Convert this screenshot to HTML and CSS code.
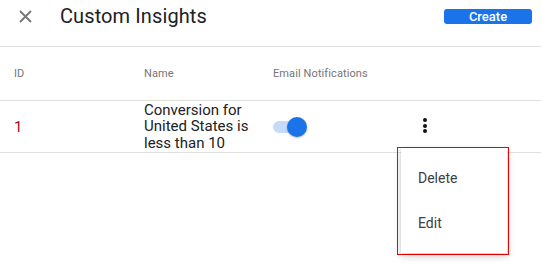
FILE: index.html
```html
<!DOCTYPE html>
<html>
<head>
<meta charset="utf-8">
<link rel="stylesheet" href="styles.css">
</head>
<body>
<div class="page">
  <header class="topbar">
    <button class="close" aria-label="Close">
      <svg width="13" height="13" viewBox="0 0 13 13"><path d="M1 1L12 12M12 1L1 12" stroke="#757575" stroke-width="1.8" fill="none"/></svg>
    </button>
    <h1 class="title">Custom Insights</h1>
    <button class="create">Create</button>
  </header>
  <div class="table">
    <div class="row head">
      <div class="cell id">ID</div>
      <div class="cell name">Name</div>
      <div class="cell email">Email Notifications</div>
      <div class="cell act"></div>
    </div>
    <div class="row body">
      <div class="cell id val">1</div>
      <div class="cell name val">Conversion for United States is less than 10</div>
      <div class="cell email"><span class="toggle"><span class="track"></span><span class="knob"></span></span></div>
      <div class="cell act"><span class="kebab"><i></i><i></i><i></i></span></div>
    </div>
  </div>
  <div class="menu">
    <div class="panel">
      <div class="item">Delete</div>
      <div class="item">Edit</div>
    </div>
  </div>
</div>
</body>
</html>
```
FILE: styles.css
```css
* { box-sizing: border-box; }
html, body { margin: 0; padding: 0; background: #fff; }
body { font-family: Roboto, "Noto Sans", sans-serif; color: #202124; }
.page { position: relative; width: 541px; height: 279px; overflow: hidden; }

.topbar {
  display: flex;
  align-items: center;
  height: 47px;
  padding: 0 9px 14px 19px;
  border-bottom: 1px solid #e0e0e0;
}
.close {
  width: 13px; height: 13px; padding: 0; border: 0; background: none;
  display: flex; margin-right: 28px;
}
.title {
  margin: 0; font-size: 20px; font-weight: 400; color: #202124; letter-spacing: 0.1px;
  flex: 1;
}
.create {
  width: 88px; height: 15px; border: 0; border-radius: 3px;
  background: #1a73e8; color: #fff;
  font-family: Roboto, sans-serif; font-size: 13px; font-weight: 500;
  line-height: 15px; padding: 0;
}

.row {
  display: grid;
  grid-template-columns: 144px 129px 150px 1fr;
  align-items: center;
  border-bottom: 1px solid #e0e0e0;
}
.row.head { height: 54px; }
.row.body { height: 52px; }
.cell.id { padding-left: 14px; }
.head .cell { font-size: 11px; color: #757575; letter-spacing: 0.1px; }
.val.id { color: #a50e0e; font-size: 15px; }
.val.name { font-size: 15px; line-height: 16.5px; color: #202124; padding-right: 4px; }

.toggle { position: relative; display: block; width: 34px; height: 20px; }
.track {
  position: absolute; left: 0; top: 4px; width: 28px; height: 12px;
  border-radius: 6px; background: #c6dafc;
}
.knob {
  position: absolute; left: 14px; top: 0; width: 20px; height: 20px;
  border-radius: 50%; background: #1a73e8;
  box-shadow: 0 1px 2px rgba(0,0,0,0.25);
}

.kebab { display: flex; flex-direction: column; gap: 1.5px; width: 4px; margin-top: -2px; }
.kebab i { display: block; width: 4px; height: 4px; border-radius: 50%; background: #111; }

.menu {
  position: absolute; left: 397px; top: 147px;
  width: 112px; height: 108px;
  border: 1px solid #f00;
  padding: 0 1px 1px 3px;
}
.panel {
  height: 100%;
  background: #fff;
  box-shadow: 0 3px 8px rgba(0,0,0,0.2), 0 0 2px rgba(0,0,0,0.1);
  padding-top: 22px;
}
.item {
  font-family: Roboto, sans-serif;
  font-size: 14px; color: #3c4043;
  padding-left: 17px;
  height: 45px;
  line-height: 16px;
}
```
